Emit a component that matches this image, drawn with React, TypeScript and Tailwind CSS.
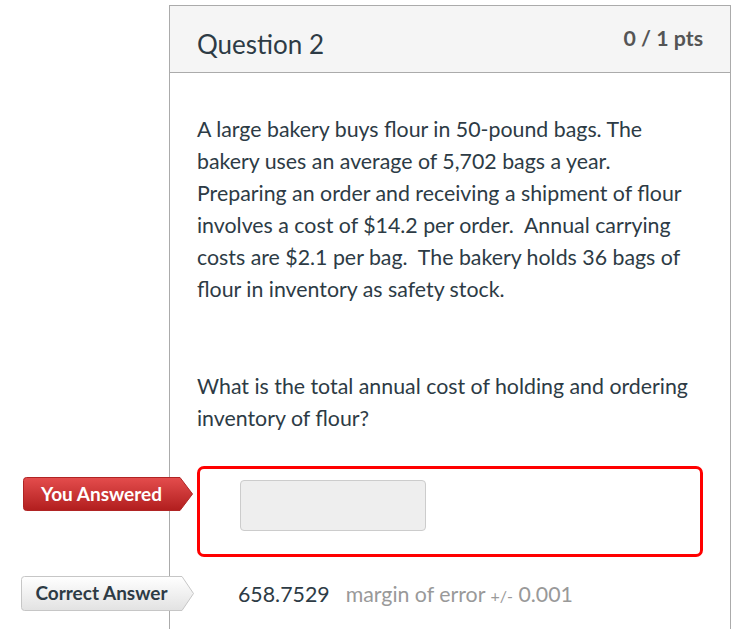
import React from "react";

function Label({ text, variant }: { text: string; variant: "wrong" | "correct" }) {
  const red = variant === "wrong";
  const w = red ? 170 : 173;
  const body = red ? 157 : 161;
  const h = red ? 34 : 35;
  return (
    <div className="relative" style={{ width: w, height: h }}>
      <svg width={w} height={h} className="absolute inset-0">
        <defs>
          <linearGradient id={`g-${variant}`} x1="0" y1="0" x2="0" y2="1">
            <stop offset="0" stopColor={red ? "#e44d4d" : "#ffffff"} />
            <stop offset="1" stopColor={red ? "#b11e1e" : "#e2e2e2"} />
          </linearGradient>
        </defs>
        <path
          d={`M3.5 0.5 H${body} L${w - 0.5} ${h / 2} L${body} ${h - 0.5} H3.5 Q0.5 ${h - 0.5} 0.5 ${h - 3.5} V3.5 Q0.5 0.5 3.5 0.5 Z`}
          fill={`url(#g-${variant})`}
          stroke={red ? "#b02424" : "#c6c6c6"}
        />
      </svg>
      <span
        className={`relative flex h-full items-center justify-center text-[19px] font-bold ${
          red ? "text-white" : "text-[#2d3b45]"
        }`}
        style={{ width: body }}
      >
        {text}
      </span>
    </div>
  );
}

export default function App() {
  return (
    <div className="h-[629px] w-[740px] overflow-hidden bg-white font-['Lato',sans-serif] text-[#2d3b45]">
      <div className="ml-[169px] mt-[5px] h-[700px] w-[562px] border border-[#ababab]">
        {/* Header */}
        <div className="flex h-[67px] items-start justify-between border-b border-[#ababab] bg-[#f5f5f5] px-[27px]">
          <h2 className="mt-[22px] text-[26px] leading-[32px]">Question 2</h2>
          <span className="mt-[18px] text-[21.33px] font-bold leading-[28px] text-[#555]">0 / 1 pts</span>
        </div>

        {/* Body */}
        <div className="px-[27px] pt-[40px]">
          <p className="text-[21.33px] leading-[32px]">
            A large bakery buys flour in 50-pound bags. The bakery uses an average of 5,702 bags a year.
            Preparing an order and receiving a shipment of flour involves a cost of $14.2 per order.&nbsp;
            Annual carrying costs are $2.1 per bag.&nbsp; The bakery holds 36 bags of flour in inventory
            as safety stock.
          </p>
          <p className="mt-[65px] text-[21.33px] leading-[32px]">
            What is the total annual cost of holding and ordering inventory of flour?
          </p>

          {/* You answered */}
          <div className="relative mt-[32px] h-[91px] rounded-[7px] border-[3px] border-[#ff0000]">
            <div className="absolute left-[-177px] top-[8px]">
              <Label text="You Answered" variant="wrong" />
            </div>
            <div className="ml-[40px] mt-[11px] h-[51px] w-[186px] rounded-[4px] border border-[#cccccc] bg-[#eeeeee]" />
          </div>

          {/* Correct answer */}
          <div className="relative mt-[19px] flex h-[35px] items-center pl-[41px] pt-[3px] text-[21.33px]">
            <div className="absolute left-[-176px] top-0">
              <Label text="Correct Answer" variant="correct" />
            </div>
            <span>658.7529</span>
            <span className="ml-[16px] text-[#999]">
              margin of error <span className="text-[16px]">+/-</span> 0.001
            </span>
          </div>
        </div>
      </div>
    </div>
  );
}
